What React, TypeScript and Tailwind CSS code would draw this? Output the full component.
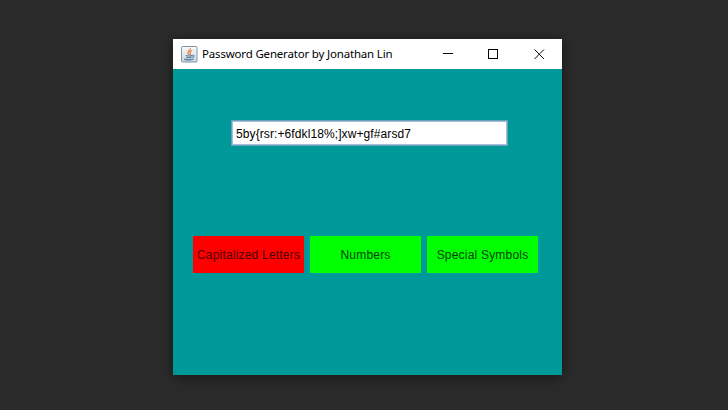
import React from "react";

function JavaIcon() {
  return (
    <svg width="17" height="17" viewBox="0 0 17 17" className="shrink-0">
      <defs>
        <linearGradient id="tile" x1="0" y1="0" x2="0" y2="1">
          <stop offset="0" stopColor="#f8fafb" />
          <stop offset="1" stopColor="#cbd6df" />
        </linearGradient>
      </defs>
      <rect x="0.5" y="0.5" width="15.5" height="15.5" rx="1" fill="url(#tile)" stroke="#8494a2" />
      <path d="M9.3 2.3C10 4.2 6 5 7 7.1C7.3 7.9 8 8.2 8 9M11.2 4.5C8.8 5.5 8.5 6.3 9.2 7.3C9.6 8 9.3 8.5 8.8 9" fill="none" stroke="#e27a3b" strokeWidth="1.2" />
      <path d="M4.8 9.4C5.5 10.3 10.5 10.1 11.2 9.5M5.3 11.2C6.5 12 9.5 11.9 10.4 11.3M11.4 9.3C13.5 8.9 13.3 10.8 11.2 11.5M3.4 12.7C4 14.3 11.8 14.2 12.6 12.8" fill="none" stroke="#50779c" strokeWidth="1.1" />
    </svg>
  );
}

function TitleBar() {
  return (
    <header className="flex h-[30px] items-center bg-white pl-2">
      <JavaIcon />
      <h1 className="ml-1 flex-1 whitespace-nowrap font-['Noto_Sans',sans-serif] text-[11.5px] leading-4 tracking-[-0.18px] text-black">
        Password Generator by Jonathan Lin
      </h1>
      <div className="flex h-full text-black">
        <button aria-label="Minimize" className="flex w-[45px] items-center justify-center">
          <svg width="11" height="11" shapeRendering="crispEdges"><path d="M0 4.5H10" stroke="currentColor" /></svg>
        </button>
        <button aria-label="Maximize" className="flex w-[45px] items-center justify-center">
          <svg width="11" height="11"><rect x="0.5" y="0.5" width="9" height="9" fill="none" stroke="currentColor" /></svg>
        </button>
        <button aria-label="Close" className="flex w-[46px] items-center justify-center">
          <svg width="11" height="11"><path d="M0.5 0.5L10 10M10 0.5L0.5 10" stroke="currentColor" strokeWidth="0.95" /></svg>
        </button>
      </div>
    </header>
  );
}

export default function App() {
  return (
    <main className="flex h-[410px] w-[728px] flex-col items-start overflow-hidden bg-[#2b2b2b] pl-[173px] pt-[39px] font-['Liberation_Sans',sans-serif] text-[12px]">
      <section className="h-[336px] w-[389px] shrink-0 bg-[#009999] shadow-[0_2px_12px_rgba(0,0,0,0.5)]">
        <TitleBar />
        <div className="pl-[58px] pt-[51px]">
          <div className="flex h-[26px] w-[277px] items-center whitespace-nowrap border border-[#6c9fb9] bg-white pl-1 pt-px tracking-[0.1px] text-black shadow-[inset_0_0_0_1px_#a3bfdc]">
            5by&#123;rsr:+6fdkl18%;]xw+gf#arsd7
          </div>
        </div>
        <div className="flex gap-1.5 pl-5 pt-[90px]">
          <button className="h-[37px] w-[111px] whitespace-nowrap bg-[#ff0000] tracking-[0.2px] text-[#4d0000]">Capitalized Letters</button>
          <button className="h-[37px] w-[111px] whitespace-nowrap bg-[#00ff00] tracking-[0.2px] text-[#063f06]">Numbers</button>
          <button className="h-[37px] w-[111px] whitespace-nowrap bg-[#00ff00] tracking-[0.2px] text-[#063f06]">Special Symbols</button>
        </div>
      </section>
    </main>
  );
}
